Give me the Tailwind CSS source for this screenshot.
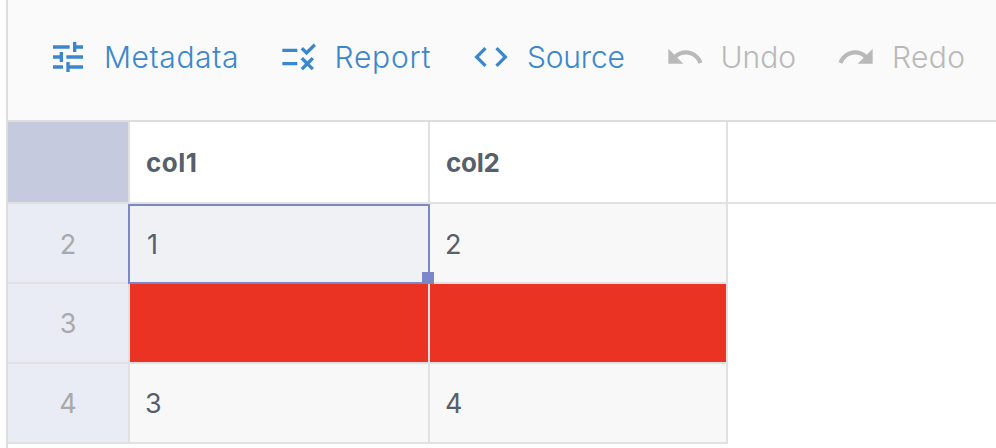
<!DOCTYPE html>
<html lang="en">
<head>
<meta charset="utf-8">
<title>Table editor</title>
<script src="https://cdn.jsdelivr.net/npm/@tailwindcss/browser@4"></script>
</head>
<body class="bg-white overflow-hidden font-['Inter',sans-serif]">
<div class="ml-1.5 h-[448px] border-l-2 border-[#dddddd] flex flex-col">
  <header class="h-[122px] shrink-0 border-b-2 border-[#dddddd] bg-[#fafafa] pl-10 pb-1.5 flex items-center text-[30px] font-light whitespace-nowrap text-[#3a87cd]">
    <button class="flex items-center w-[230.5px] shrink-0"><svg class="size-10 shrink-0 mr-4" viewBox="0 0 24 24" fill="currentColor"><path d="M3 17v2h6v-2H3zM3 5v2h10V5H3zm10 16v-2h8v-2h-8v-2h-2v6h2zM7 9v2H3v2h4v2h2V9H7zm14 4v-2H11v2h10zm-6-4h2V7h4V5h-4V3h-2v6z"/></svg><span class="tracking-[0.6px]">Metadata</span></button>
    <button class="flex items-center w-[192.5px] shrink-0"><svg class="size-10 shrink-0 mr-4" viewBox="0 0 24 24" fill="currentColor"><path d="M16.54 11L13 7.46l1.41-1.41 2.12 2.12 4.24-4.24 1.41 1.41L16.54 11zM11 7H2v2h9V7zM21 13.41L19.59 12 17 14.59 14.41 12 13 13.41 15.59 16 13 18.59 14.41 20 17 17.41 19.59 20 21 18.59 18.41 16 21 13.41zM11 15H2v2h9v-2z"/></svg><span class="tracking-[0.8px]">Report</span></button>
    <button class="flex items-center w-[193.5px] shrink-0"><svg class="size-10 shrink-0 mr-4" viewBox="0 0 24 24" fill="currentColor"><path d="M9.4 16.6L4.8 12l4.6-4.6L8 6l-6 6 6 6 1.4-1.4zm5.2 0l4.6-4.6-4.6-4.6L16 6l6 6-6 6-1.4-1.4z"/></svg><span class="tracking-[-0.2px]">Source</span></button>
    <button class="flex items-center w-[171.5px] shrink-0 text-[#b9b9b9]"><svg class="size-10 shrink-0 mr-4" viewBox="0 0 24 24" fill="currentColor"><path d="M12.5 8c-2.65 0-5.05.99-6.9 2.6L2 7v9h9l-3.62-3.62c1.39-1.16 3.16-1.88 5.12-1.88 3.54 0 6.55 2.31 7.6 5.5l2.37-.78C21.08 11.03 17.15 8 12.5 8z"/></svg><span>Undo</span></button>
    <button class="flex items-center shrink-0 text-[#b9b9b9]"><svg class="size-10 shrink-0 mr-4" viewBox="0 0 24 24" fill="currentColor"><path d="M18.4 10.6C16.55 8.99 14.15 8 11.5 8c-4.65 0-8.58 3.03-9.96 7.22L3.9 16c1.05-3.19 4.05-5.5 7.6-5.5 1.95 0 3.73.72 5.12 1.88L13 16h9V7l-3.6 3.6z"/></svg><span class="tracking-[0.4px]">Redo</span></button>
  </header>
  <div class="h-[82px] shrink-0 border-b-2 border-[#e1e1e1] flex text-[26px] font-bold text-[#575f6b]">
    <div class="w-[122px] bg-[#c5cade] border-r-2 border-[#e1e1e1]"></div>
    <div class="w-[300px] border-r-2 border-[#e1e1e1] pl-4 flex items-center tracking-[0.5px]">col1</div>
    <div class="w-[298px] border-r-2 border-[#e1e1e1] pl-4 flex items-center tracking-[-0.3px]">col2</div>
  </div>
  <div class="relative w-[720px] grid grid-cols-[122px_300px_298px] auto-rows-[80px] text-[27px] text-[#575f6b] *:border-r-2 *:border-b-2 *:border-[#e1e1e1] *:flex *:items-center">
    <div class="bg-[#e9ecf5] justify-center pt-1 text-[#a9a9a9]">2</div>
    <div class="bg-[#f0f1f5] pt-1 pl-[17px]">1</div>
    <div class="bg-[#f8f8f8] pt-1 pl-[15px]">2</div>
    <div class="bg-[#e9ecf5] justify-center pt-0.5 text-[#a9a9a9]">3</div>
    <div class="bg-[#eb3323]"></div>
    <div class="bg-[#eb3323]"></div>
    <div class="bg-[#e9ecf5] justify-center pt-0.5 text-[#a9a9a9]">4</div>
    <div class="bg-[#f8f8f8] pt-0.5 pl-[15px]">3</div>
    <div class="bg-[#f8f8f8] pt-0.5 pl-[15px]">4</div>
    <span class="absolute left-[120px] top-0 w-[302px] h-20 outline-2 -outline-offset-2 outline-[#7b87c8] border-none!"></span>
    <span class="absolute left-[414px] top-[68px] size-3 bg-[#7b87c8] border-none!"></span>
  </div>
</div>
</body>
</html>
